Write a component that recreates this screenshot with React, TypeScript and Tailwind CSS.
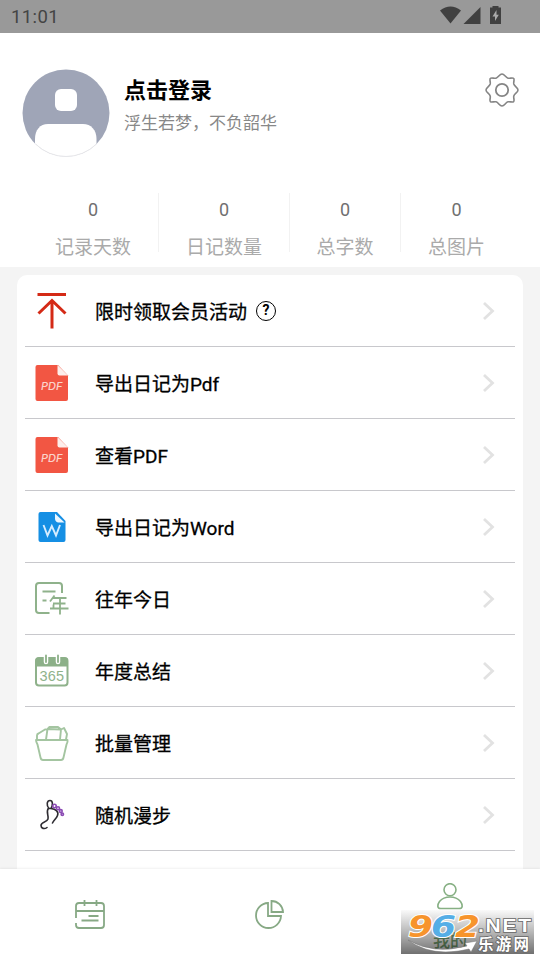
import type { ReactNode } from "react";

function UploadIcon() {
  return (
    <svg width="40" height="40" viewBox="0 0 40 40" fill="none" stroke="#d42a16" strokeWidth="3">
      <path d="M5.500 3.500H34M20 37.500V10.500M6.500 22.500L20 9.500L33.500 22.500" />
    </svg>
  );
}

function PdfIcon() {
  return (
    <svg width="40" height="40" viewBox="0 0 40 40">
      <path d="M5.500 2H26L36 12.500V36Q36 38 34 38H5.500Q3.500 38 3.500 36V4Q3.500 2 5.500 2Z" fill="#f25643" />
      <path d="M25.500 2L36 12.500H27.500Q25.500 12.500 25.500 10.500Z" fill="#fdeeeb" />
      <text
        x="9"
        y="27"
        textLength="21.500"
        lengthAdjust="spacingAndGlyphs"
        fontSize="11"
        fontStyle="italic"
        fontWeight="500"
        fontFamily="Inter, sans-serif"
        fill="#fbd3cb"
      >
        PDF
      </text>
    </svg>
  );
}

function WordIcon() {
  return (
    <svg width="40" height="40" viewBox="0 0 40 40">
      <path d="M8.500 5H25L33.500 14V33Q33.500 35 31.500 35H8.500Q6.500 35 6.500 33V7Q6.500 5 8.500 5Z" fill="#158fe4" />
      <path d="M23 6.500L32.500 15.500H26Q23 14.500 23 11.500Z" fill="#eaf6ff" />
      <path d="M11.500 18L15.500 28.500L19.800 19L24 28.500L28 18" fill="none" stroke="#d6edff" strokeWidth="1.900" />
    </svg>
  );
}

function PastIcon() {
  return (
    <svg width="40" height="40" viewBox="0 0 40 40" fill="none" stroke="#8fb28b" strokeWidth="2">
      <path d="M30 14V7Q30 4 27 4H7Q4 4 4 7V31Q4 34 7 34H17.500" />
      <path d="M10.500 12.500H23.500M10.500 21.500H14.500" strokeWidth="2.200" />
      <path d="M22.500 16.500L18 22.500M21 19H34.500M21.500 25.500V29.500M21 24.500H33.500M18 29.500H36.500M28 19V35.500" strokeWidth="1.800" />
    </svg>
  );
}

function YearIcon() {
  return (
    <svg width="40" height="40" viewBox="0 0 40 40">
      <rect x="4" y="7" width="31.500" height="27.500" rx="3" fill="#fff" stroke="#8fb28b" strokeWidth="2" />
      <path d="M3.500 15.500V9Q3.500 6.500 6.500 6.500H33Q36 6.500 36 9V15.500Z" fill="#8cb088" />
      <path d="M14 5V11M26 5V11" stroke="#fff" strokeWidth="4.500" strokeLinecap="round" />
      <path d="M14 4.500V11M26 4.500V11" stroke="#8cb088" strokeWidth="1.800" strokeLinecap="round" />
      <text x="7.500" y="30" textLength="24.500" fontSize="14.500" fontFamily="'Liberation Sans', sans-serif" fill="#8fb28b">
        365
      </text>
    </svg>
  );
}

function BasketIcon() {
  return (
    <svg width="40" height="40" viewBox="0 0 40 40" fill="none" stroke="#a4c5a1" strokeWidth="1.900" strokeLinejoin="round">
      <path d="M4 17H35.500Q36 19 34.500 21.500L31.500 34.500Q31 37 29 37H11Q9 37 8.500 34.500L5.500 21.500Q4 19 4 17Z" />
      <path d="M5 16.500V12.500Q5 11 6.500 10.500L13 6.500Q15 6 15.500 7.500M14 16.500L15.500 6L29 6.500L28 16.500M16 5.500L17.500 4H26L28.500 6M29 6.500L32 5L35 11L34 16.500" />
    </svg>
  );
}

function FootIcon() {
  return (
    <svg width="40" height="40" viewBox="0 0 40 40" fill="none">
      <path
        d="M17 13.500C14 10 15 5.500 18 5.500C21 5.500 21 10 19 13.500ZM16.500 13C13.500 17 17 20.500 16 24C15 27.500 9 26.500 9 30.500C9 33.500 12.500 34.500 15 32.500M19 13.500C24 14 27 17 25.500 20.500C24.500 23.500 22 25 20.500 28"
        stroke="#2e2c32"
        strokeWidth="1.600"
        strokeLinecap="round"
      />
      <g stroke="#8b4bb4" strokeWidth="1.600">
        <circle cx="22.500" cy="11" r="1.700" />
        <circle cx="26" cy="13.200" r="1.500" />
        <circle cx="28.800" cy="16" r="1.400" />
        <circle cx="30.300" cy="19.200" r="1.200" />
      </g>
    </svg>
  );
}

function StatusIcons() {
  return (
    <svg width="62" height="20" viewBox="0 0 62 20" fill="#404040">
      <path d="M0 4.500Q10.500 -3.300 21 4.500L10.500 17.500Z" />
      <path d="M40.500 1V18H23.500Z" />
      <path d="M52.500 0H58.500V1.500H61V18H50V1.500H52.500Z" />
      <path d="M56.500 4L52.500 10.500H55V15L58.800 8.700H56.500Z" fill="#aaa" />
    </svg>
  );
}

function GearIcon() {
  return (
    <svg width="34" height="34" viewBox="0 0 34 34" fill="none" stroke="#858585" strokeWidth="1.600" strokeLinejoin="round">
      <path d="M17 1C19.500 1 20.500 4.500 23 5.200C25 5.700 27.500 4.200 28.600 5.400C29.800 6.500 28.300 9 28.800 11C29.500 13.500 33 14.500 33 17C33 19.500 29.500 20.500 28.800 23C28.300 25 29.800 27.500 28.600 28.600C27.500 29.800 25 28.300 23 28.800C20.500 29.500 19.500 33 17 33C14.500 33 13.500 29.500 11 28.800C9 28.300 6.500 29.800 5.400 28.600C4.200 27.500 5.700 25 5.200 23C4.500 20.500 1 19.500 1 17C1 14.500 4.500 13.500 5.200 11C5.700 9 4.200 6.500 5.400 5.400C6.500 4.200 9 5.700 11 5.200C13.500 4.500 14.500 1 17 1Z" />
      <circle cx="17" cy="17" r="6.200" strokeWidth="1.800" />
    </svg>
  );
}

function Avatar() {
  return (
    <svg width="88" height="88" viewBox="0 0 88 88">
      <defs>
        <clipPath id="avatar">
          <circle cx="44" cy="44" r="43.500" />
        </clipPath>
      </defs>
      <g clipPath="url(#avatar)">
        <rect width="88" height="88" fill="#9fa5b7" />
        <rect x="33" y="20" width="22" height="22" rx="6" fill="#fff" />
        <path d="M13 88V70C13 61 18 55 26 55H61C69 55 74.500 61 74.500 70V88Z" fill="#fff" />
      </g>
      <path d="M13.500 75A43.500 43.500 0 0 0 74.500 75" fill="none" stroke="#e7e7ea" />
    </svg>
  );
}

function Watermark() {
  return (
    <svg className="overflow-visible" width="133" height="44" viewBox="0 0 133 44">
      <defs>
        <linearGradient id="shade" x1="0" y1="0" x2="0" y2="1">
          <stop offset="0" stopColor="#000" stopOpacity="0.020" />
          <stop offset="0.500" stopColor="#000" stopOpacity="0.280" />
          <stop offset="1" stopColor="#000" stopOpacity="0.560" />
        </linearGradient>
      </defs>
      <rect width="133" height="44" fill="url(#shade)" />
      <path d="M7 30Q32 45 66 36L64 33L76 31L70 42L68 39Q31 48 7 30Z" fill="#fff" stroke="#777" strokeWidth="0.500" />
      <g
        fontFamily="'DejaVu Sans', sans-serif"
        fontWeight="bold"
        fontStyle="italic"
        fontSize="31"
        stroke="#fff"
        strokeWidth="2"
        paintOrder="stroke"
      >
        <text x="7" y="27" textLength="25" lengthAdjust="spacingAndGlyphs" fill="#f7942c">9</text>
        <text x="30" y="27" textLength="25" lengthAdjust="spacingAndGlyphs" fill="#55aee6">6</text>
        <text x="54" y="27" textLength="25" lengthAdjust="spacingAndGlyphs" fill="#f7942c">2</text>
      </g>
      <g fill="#fff" stroke="#666" strokeWidth="1.500" paintOrder="stroke" fontWeight="bold">
        <text
          x="77"
          y="21.500"
          fontSize="18"
          letterSpacing="1.500"
          textLength="55"
          lengthAdjust="spacingAndGlyphs"
          fontFamily="'Liberation Sans', sans-serif"
        >
          .NET
        </text>
        <text x="77" y="40" fontSize="15.500" textLength="51" fontFamily="'Noto Sans CJK SC', sans-serif">乐游网</text>
      </g>
    </svg>
  );
}

const stats = [
  { label: "记录天数", width: "w-[131px]" },
  { label: "日记数量", width: "w-[131px]" },
  { label: "总字数", width: "w-[111px]" },
  { label: "总图片", width: "w-[111px]" },
];

const items: { title: string; icon: ReactNode; help?: boolean }[] = [
  { title: "限时领取会员活动", icon: <UploadIcon />, help: true },
  { title: "导出日记为Pdf", icon: <PdfIcon /> },
  { title: "查看PDF", icon: <PdfIcon /> },
  { title: "导出日记为Word", icon: <WordIcon /> },
  { title: "往年今日", icon: <PastIcon /> },
  { title: "年度总结", icon: <YearIcon /> },
  { title: "批量管理", icon: <BasketIcon /> },
  { title: "随机漫步", icon: <FootIcon /> },
];

export default function App() {
  return (
    <div className="flex h-[960px] w-[540px] flex-col overflow-hidden bg-[#f4f4f4] font-[Roboto,'Noto_Sans_CJK_SC',sans-serif]">
      <div className="flex h-[33px] shrink-0 items-center justify-between bg-[#999] pr-[38px] pl-[11px]">
        <span className="pt-[3px] text-[18.500px] tracking-[0.4px] text-[#444]">11:01</span>
        <div className="-mt-0.5">
          <StatusIcons />
        </div>
      </div>

      <header className="h-[234px] shrink-0 bg-white">
        <div className="flex h-40 items-start pt-9 pr-[22px] pl-[22px]">
          <Avatar />
          <div className="ml-3.5 flex-1 pt-1.5">
            <h1 className="text-[22px] leading-8 font-bold text-black">点击登录</h1>
            <p className="mt-1 text-[17px] leading-6 text-[#888]">浮生若梦，不负韶华</p>
          </div>
          <div className="-mr-px pt-1">
            <GearIcon />
          </div>
        </div>
        <div className="flex pl-7">
          {stats.map((stat) => (
            <div
              key={stat.label}
              className={`${stat.width} flex h-[59px] flex-col items-center border-r border-[#f2f2f2] last:border-r-0`}
            >
              <span className="mt-[5px] text-[18px] leading-6 text-[#707070]">0</span>
              <span className="mt-3 text-[19px] leading-7 whitespace-nowrap text-[#aaa]">{stat.label}</span>
            </div>
          ))}
        </div>
      </header>

      <main className="mx-[17px] mt-2 min-h-0 flex-1 overflow-hidden rounded-t-[10px] bg-white px-2">
        {items.map((item) => (
          <div key={item.title} className="flex h-[72px] items-center border-b border-[#c8c8cc] pr-5 pl-[7px]">
            {item.icon}
            <span className="ml-[23px] pt-1.5 text-[19px] text-black [-webkit-text-stroke:0.3px_black]">{item.title}</span>
            {item.help && (
              <span className="ml-[9px] flex size-5 items-center justify-center rounded-full border-[1.500px] border-black text-[14px] font-bold">
                ?
              </span>
            )}
            <svg className="ml-auto" width="13" height="20" viewBox="0 0 13 20" fill="none" stroke="#e2e2e2" strokeWidth="2.800">
              <path d="M2 2L10.500 10L2 18" />
            </svg>
          </div>
        ))}
      </main>

      <nav className="relative flex h-[91px] shrink-0 bg-white shadow-[0_-1px_2px_rgba(0,0,0,0.06)]">
        <div className="flex flex-1 items-center justify-center">
          <svg width="30" height="30" viewBox="0 0 30 30" fill="none" stroke="#87a985" strokeWidth="1.800">
            <path d="M1 18V6Q1 3 4 3H26Q29 3 29 6V25Q29 28 26 28H4Q1 28 1 25V23M1 11H29M9.500 0V6M21.500 0V6M13.500 16H23.500M6.500 20.500H23.500" />
          </svg>
        </div>
        <div className="flex flex-1 items-center justify-center">
          <svg width="30" height="30" viewBox="0 0 30 30" fill="none" stroke="#87a985" strokeWidth="1.800">
            <path d="M13 3A12.500 12.500 0 1 0 26 16H13ZM16.500 1V12H28A11.500 11.500 0 0 0 16.500 1Z" />
          </svg>
        </div>
        <div className="flex flex-1 flex-col items-center pt-3.5">
          <svg width="28" height="28" viewBox="0 0 28 28" fill="none" stroke="#87b084" strokeWidth="1.600">
            <circle cx="14" cy="6.700" r="6" />
            <path d="M5 25.500H23C27 25.500 27 22 24.500 18.500C19.500 12.500 8.500 12.500 3.500 18.500C1 22 1 25.500 5 25.500Z" />
          </svg>
          <span className="mt-4 text-[17px] leading-7 font-medium text-[#78a675]">我的</span>
        </div>
        <div className="absolute top-[41px] left-[401px]">
          <Watermark />
        </div>
      </nav>
    </div>
  );
}
